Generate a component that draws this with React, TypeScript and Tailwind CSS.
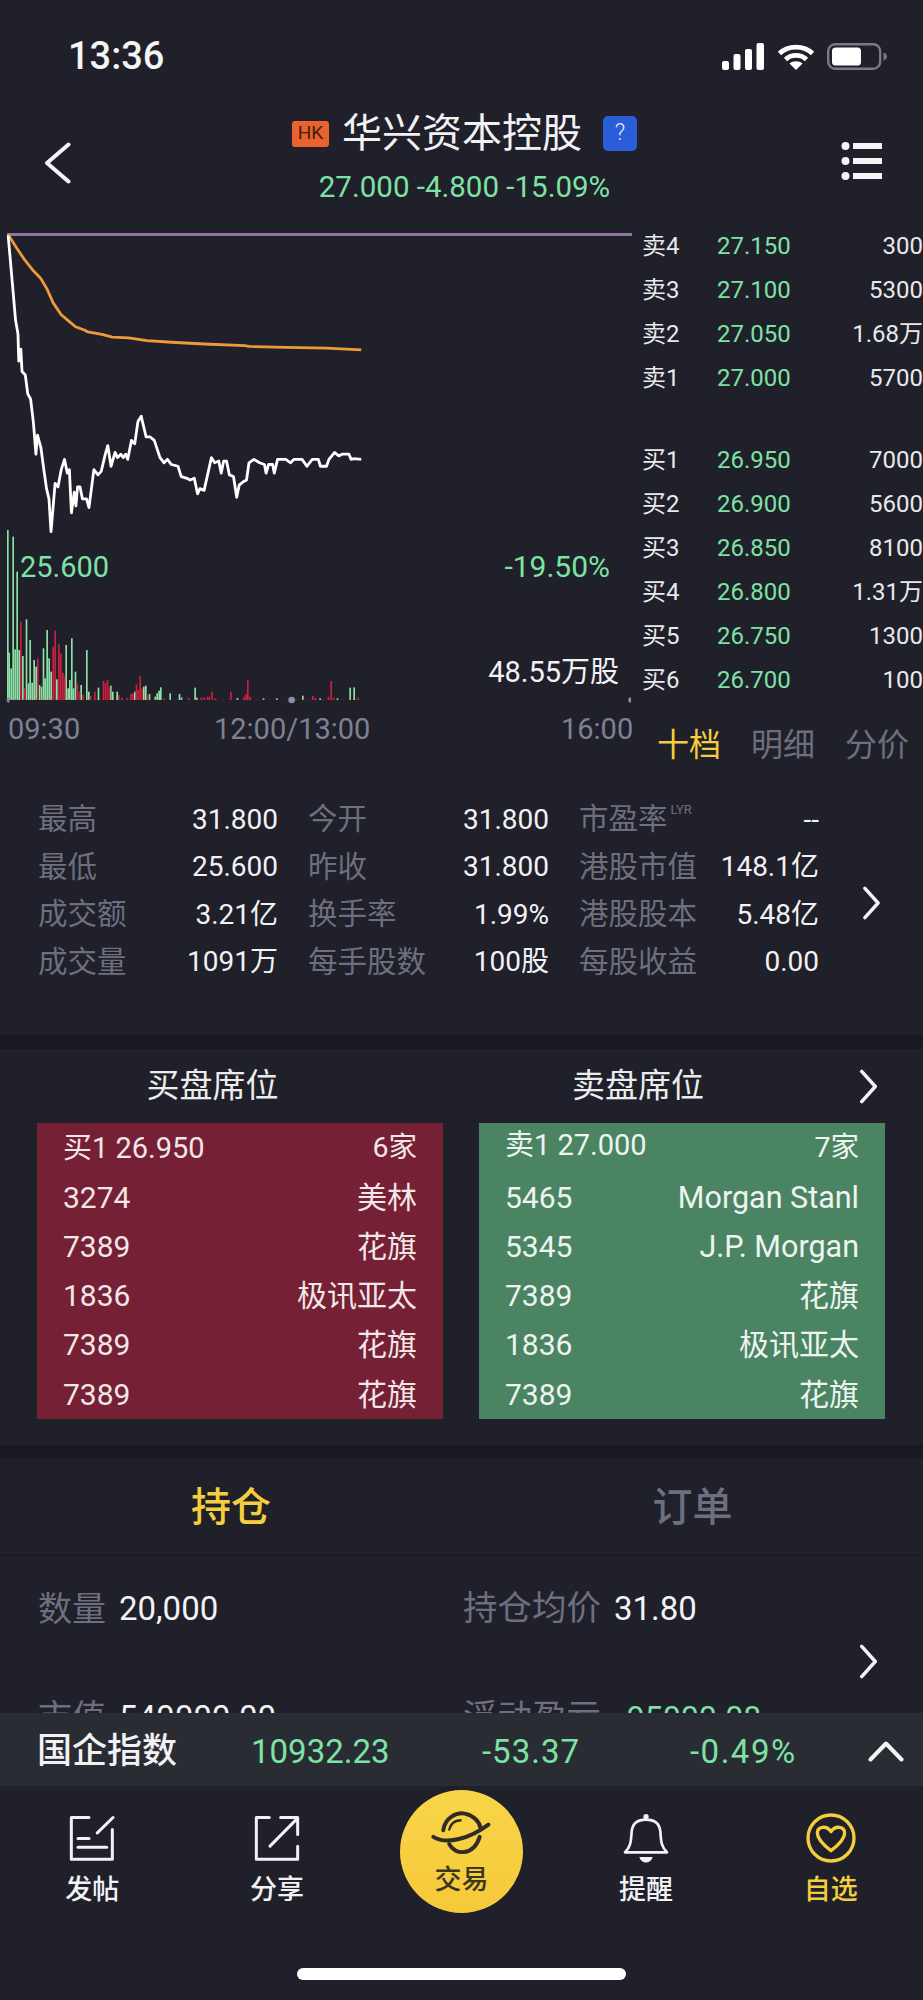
import React from "react";

const GREEN = "text-[#7de3a4]";

const whiteLine =
  "20,45 30,180 38,290 44,330 46,410 51,375 54,440 62,450 68,505 75,520 82,590 88,680 92,625 100,660 108,730 114,780 120,810 125,905 135,765 142,775 150,725 158,695 165,735 170,725 175,850 182,790 186,830 190,775 196,775 202,810 212,810 218,835 230,725 240,740 248,730 258,680 264,655 272,715 282,675 288,690 296,680 302,690 308,680 313,695 322,640 330,650 338,585 346,570 358,630 368,630 378,640 392,690 402,705 410,695 420,710 436,715 444,745 458,750 466,755 476,750 484,795 490,780 500,785 518,690 526,705 536,700 542,735 548,700 555,700 562,740 572,745 580,805 586,770 596,760 604,755 610,705 622,695 636,705 648,710 652,735 658,710 668,710 672,735 680,695 700,695 712,705 720,695 740,695 752,715 765,695 780,695 785,715 800,715 806,695 820,675 830,685 838,680 855,680 860,695 868,693 885,695";
const orangeLine =
  "20,42 40,80 60,115 80,145 100,170 115,200 130,240 150,275 170,295 185,310 208,320 215,325 250,332 275,340 315,342 360,350 420,355 500,360 600,365 610,367 700,370 800,372 885,377";

const greenBars = [
  [23, 30], [27, 398], [33, 445], [39, 50], [45, 388], [51, 155], [57, 390], [68, 408], [79, 298], [85, 490], [90, 360], [96, 488], [102, 420], [108, 440], [118, 495], [124, 500], [130, 385], [135, 475], [141, 330], [147, 415], [153, 455], [170, 478], [198, 375], [204, 505], [209, 480], [215, 355], [220, 505], [226, 455], [243, 495], [260, 390], [266, 515], [295, 503], [332, 497], [338, 515], [351, 515], [404, 515], [431, 500], [437, 497], [448, 522], [465, 530], [471, 520], [477, 512], [482, 502], [510, 520], [538, 522], [544, 532], [585, 503], [590, 533], [712, 534], [790, 535], [830, 535], [908, 527], [960, 535], [1012, 535], [1050, 503], [1062, 502],
];
const redBars = [
  [62, 305], [74, 505], [113, 415], [159, 380], [165, 332], [176, 372], [182, 400], [188, 458], [193, 470], [232, 490], [238, 515], [249, 525], [272, 528], [284, 515], [310, 483], [316, 490], [322, 480], [328, 500], [356, 525], [365, 533], [380, 533], [392, 522], [398, 520], [409, 493], [414, 510], [420, 468], [426, 505], [442, 525], [492, 535], [565, 533], [603, 533], [612, 532], [622, 530], [628, 530], [636, 515], [645, 535], [692, 515], [732, 530], [738, 522], [743, 480], [750, 530], [938, 527], [945, 533], [985, 530], [993, 483], [1000, 533], [1074, 532],
];

function Chevron({ className }: { className: string }) {
  return (
    <svg viewBox="0 0 20 36" className={className} fill="none" stroke="#f2f2f4" strokeWidth="3.6" strokeLinecap="round" strokeLinejoin="round">
      <path d="M3 2.5 L17 18 L3 33.5" />
    </svg>
  );
}

function StatusBar() {
  return (
    <div className="h-[112px] flex items-center justify-between pl-[68px] pr-[36px]">
      <span className="text-[38px] font-medium text-[#f5f5f7] leading-none">13:36</span>
      <div className="flex items-center">
        <svg width="43" height="27" viewBox="0 0 43 27" fill="#fff">
          <rect x="0" y="18" width="7" height="9" rx="2" />
          <rect x="11.5" y="11" width="7" height="16" rx="2" />
          <rect x="23" y="6" width="7" height="21" rx="2" />
          <rect x="34.5" y="0" width="7.5" height="27" rx="2" />
        </svg>
        <svg className="ml-[12px]" width="38" height="27" viewBox="0 0 38 27" fill="none" stroke="#fff" strokeWidth="4.6">
          <path d="M2.5 10.5 C11 2 27 2 35.5 10.5" />
          <path d="M8.5 16.5 C14 11 24 11 29.5 16.5" />
          <path d="M12.5 20.5 C16 17.5 22 17.5 25.5 20.5 L19 27 Z" fill="#fff" stroke="none" />
        </svg>
        <svg className="ml-[12px]" width="60" height="27" viewBox="0 0 60 27" fill="none">
          <rect x="1.2" y="1.2" width="52" height="24.6" rx="7" stroke="#7a7a82" strokeWidth="2.4" />
          <rect x="5" y="4.5" width="29" height="18" rx="3.5" fill="#fff" />
          <path d="M56.5 9.5 C59 10.5 60 12 60 13.5 C60 15 59 16.5 56.5 17.5 Z" fill="#7a7a82" />
        </svg>
      </div>
    </div>
  );
}

function Header() {
  return (
    <div className="h-[108px] pb-[12px] flex items-center">
      <div className="flex-1 pl-[44px] pt-[6px]">
        <svg width="27" height="42" viewBox="0 0 27 42" fill="none" stroke="#f5f5f7" strokeWidth="4" strokeLinecap="round" strokeLinejoin="round">
          <path d="M24.5 2.5 L3 21 L24.5 39.5" />
        </svg>
      </div>
      <div className="flex flex-col items-center ml-[3px]">
        <div className="flex items-center h-[40px] -mt-[4px]">
          <span className="w-[37px] h-[26px] flex items-center justify-center bg-[#e8632d] rounded-[3px] text-[19px] text-[#43200f]">HK</span>
          <span className="ml-[13px] text-[40px] leading-[40px] text-[#f2f2f4] whitespace-nowrap">华兴资本控股</span>
          <span className="ml-[21px] w-[34px] h-[35px] flex items-center justify-center bg-[#2a5dd8] rounded-[5px] text-[23px] font-light text-[#dfe7fb]">?</span>
        </div>
        <div className={`mt-[17px] text-[29.5px] leading-[32px] whitespace-nowrap ${GREEN}`}>27.000 -4.800 -15.09%</div>
      </div>
      <div className="flex-1 flex justify-end pr-[41px] pt-[1px]">
        <svg width="41" height="40" viewBox="0 0 41 40" fill="#f5f5f7">
          <circle cx="4.5" cy="5" r="4" />
          <circle cx="4.5" cy="20" r="4" />
          <circle cx="4.5" cy="35" r="4" />
          <rect x="12" y="2" width="29" height="6" />
          <rect x="12" y="17" width="29" height="6" />
          <rect x="12" y="32" width="29" height="6" />
        </svg>
      </div>
    </div>
  );
}

function Chart() {
  return (
    <div className="w-[641px] flex-none">
      <div className="relative h-[490px]">
        <svg width="641" height="490" viewBox="0 0 641 490" fill="none">
          <line x1="7" y1="14.5" x2="632" y2="14.5" stroke="#8f75a0" strokeWidth="3" />
          <g transform="scale(0.40816 0.34439)">
            <polyline points={orangeLine} stroke="#ef9a3a" strokeWidth="2.8" vectorEffect="non-scaling-stroke" strokeLinejoin="round" />
            <polyline points={whiteLine} stroke="#ffffff" strokeWidth="2.8" vectorEffect="non-scaling-stroke" strokeLinejoin="round" />
          </g>
          <g transform="translate(0 300) scale(0.33333)">
            {greenBars.map(([x, top]) => (
              <rect key={`g${x}`} x={x - 2} y={top} width="5" height={540 - top} fill="#8ce2a4" />
            ))}
            {redBars.map(([x, top]) => (
              <rect key={`r${x}`} x={x - 2} y={top} width="5" height={540 - top} fill="#c9203f" />
            ))}
            <line x1="25" y1="539" x2="1078" y2="539" stroke="#c9203f" strokeWidth="1.5" strokeDasharray="6 14" />
            <circle cx="875" cy="540" r="10" fill="#8f8aa8" />
            <path d="M28 532 a8 8 0 0 0 0 16 Z" fill="#8f8aa8" />
            <path d="M1893 532 a8 8 0 0 0 0 16 Z" fill="#8f8aa8" />
          </g>
        </svg>
        <span className={`absolute left-[20px] top-[331px] text-[29px] leading-[32px] ${GREEN}`}>25.600</span>
        <span className={`absolute right-[31px] top-[331px] text-[30px] leading-[32px] ${GREEN}`}>-19.50%</span>
        <span className="absolute right-[22px] top-[436px] text-[29px] leading-[32px] text-[#f2f2f4]">48.55万股</span>
      </div>
      <div className="h-[40px] flex items-center pl-[8px] text-[29px] text-[#7f8093]">
        <span className="w-[206px]">09:30</span>
        <span className="w-[347px]">12:00/13:00</span>
        <span>16:00</span>
      </div>
    </div>
  );
}

const asks = [
  ["卖4", "27.150", "300"],
  ["卖3", "27.100", "5300"],
  ["卖2", "27.050", "1.68万"],
  ["卖1", "27.000", "5700"],
];
const bids = [
  ["买1", "26.950", "7000"],
  ["买2", "26.900", "5600"],
  ["买3", "26.850", "8100"],
  ["买4", "26.800", "1.31万"],
  ["买5", "26.750", "1300"],
  ["买6", "26.700", "100"],
];

function BookRow({ r }: { r: string[] }) {
  return (
    <div className="h-[44px] flex items-center text-[24px] leading-none">
      <span className="w-[75px] text-[#e9e9ec]">{r[0]}</span>
      <span className={`w-[80px] ${GREEN}`}>{r[1]}</span>
      <span className="flex-1 text-right text-[#e9e9ec]">{r[2]}</span>
    </div>
  );
}

function Book() {
  return (
    <div className="flex-1 pt-[4px] pl-[1px]">
      {asks.map((r) => (
        <BookRow key={r[0]} r={r} />
      ))}
      <div className="h-[38px]" />
      {bids.map((r) => (
        <BookRow key={r[0]} r={r} />
      ))}
      <div className="mt-[23px] h-[40px] flex items-center gap-[30px] pl-[15px] text-[32px] leading-none whitespace-nowrap">
        <span className="text-[#f4ce3c]">十档</span>
        <span className="text-[#6e6f7e]">明细</span>
        <span className="text-[#6e6f7e]">分价</span>
      </div>
    </div>
  );
}

const stats = [
  ["最高", "31.800", "今开", "31.800", "市盈率", "--"],
  ["最低", "25.600", "昨收", "31.800", "港股市值", "148.1亿"],
  ["成交额", "3.21亿", "换手率", "1.99%", "港股股本", "5.48亿"],
  ["成交量", "1091万", "每手股数", "100股", "每股收益", "0.00"],
];

function Stats() {
  return (
    <div className="mt-[31px] h-[239px] flex items-start pl-[38px]">
      <div className="w-[781px] grid grid-cols-[240px_241px_240px] gap-x-[30px] text-[28px] leading-none">
        {stats.map((r) => (
          <React.Fragment key={r[0]}>
            {[0, 2, 4].map((i) => (
              <div key={i} className="h-[47.5px] flex items-center justify-between whitespace-nowrap">
                <span className="text-[#6e6f7e] text-[29.5px]">
                  {r[i]}
                  {r[i] === "市盈率" && <span className="relative -top-[15px] ml-[3px] text-[13px]">LYR</span>}
                </span>
                <span className="text-[#f2f2f4]">{r[i + 1]}</span>
              </div>
            ))}
          </React.Fragment>
        ))}
      </div>
      <Chevron className="ml-[43px] mt-[90px] w-[19px] h-[34px]" />
    </div>
  );
}

const buyRows = [
  ["买1 26.950", "6家"],
  ["3274", "美林"],
  ["7389", "花旗"],
  ["1836", "极讯亚太"],
  ["7389", "花旗"],
  ["7389", "花旗"],
];
const sellRows = [
  ["卖1 27.000", "7家"],
  ["5465", "Morgan Stanl"],
  ["5345", "J.P. Morgan"],
  ["7389", "花旗"],
  ["1836", "极讯亚太"],
  ["7389", "花旗"],
];

function Seats() {
  return (
    <div className="h-[396px]">
      <div className="h-[74px] flex items-center text-[33px] text-[#ececef]">
        <span className="w-[425px] text-center">买盘席位</span>
        <span className="w-[426px] text-center">卖盘席位</span>
        <Chevron className="ml-[7px] w-[21px] h-[35px]" />
      </div>
      <div className="flex gap-[36px] px-[37px]">
        <div className="w-[406px] h-[296px] bg-[#752034] px-[26px] pt-[1px] text-[#f1e6e8] text-[30px] leading-none">
          {buyRows.map((r, i) => (
            <div key={i} className="h-[49.2px] flex items-center justify-between whitespace-nowrap">
              <span className={i === 0 ? "text-[29px]" : ""}>{r[0]}</span>
              <span className={i === 0 ? "text-[28.5px]" : ""}>{r[1]}</span>
            </div>
          ))}
        </div>
        <div className="w-[406px] h-[296px] bg-[#4b8463] px-[26px] pt-[1px] text-[#eef4f0] text-[30px] leading-none">
          {sellRows.map((r, i) => (
            <div key={i} className="h-[49.2px] flex items-center justify-between whitespace-nowrap">
              <span className={i === 0 ? "text-[29px] -translate-y-[3px]" : ""}>{r[0]}</span>
              <span className={i === 0 ? "text-[28.5px]" : i === 1 || i === 2 ? "text-[30.5px]" : ""}>{r[1]}</span>
            </div>
          ))}
        </div>
      </div>
    </div>
  );
}

function Position() {
  return (
    <div>
      <div className="h-[96px] pt-[3px] flex items-center text-[40px] leading-none">
        <span className="w-[462px] text-center font-medium text-[#f4ce3c]">持仓</span>
        <span className="w-[461px] text-center font-medium text-[#6e6f7e]">订单</span>
      </div>
      <div className="h-[2px] bg-[#1b1c23]" />
      <div className="h-[157px] overflow-hidden flex items-start pl-[38px]">
        <div className="w-[820px] text-[33px] leading-none">
          <div className="h-[105px] flex items-center">
            <span className="w-[425px] flex items-center">
              <span className="text-[34px] text-[#6e6f7e]">数量</span>
              <span className="ml-[13px] text-[#f2f2f4]">20,000</span>
            </span>
            <span className="flex items-center">
              <span className="text-[34.5px] text-[#6e6f7e]">持仓均价</span>
              <span className="ml-[13px] text-[#f2f2f4]">31.80</span>
            </span>
          </div>
          <div className="h-[112px] flex items-center">
            <span className="w-[425px] flex items-center">
              <span className="text-[34px] text-[#6e6f7e]">市值</span>
              <span className="ml-[13px] text-[#f2f2f4]">540000.00</span>
            </span>
            <span className="flex items-center">
              <span className="text-[34.5px] text-[#6e6f7e]">浮动盈亏</span>
              <span className={`ml-[17px] text-[32px] ${GREEN}`}>-95000.08</span>
            </span>
          </div>
        </div>
        <Chevron className="mt-[88px] w-[21px] h-[35px] flex-none" />
      </div>
    </div>
  );
}

function IndexBar() {
  return (
    <div className="h-[73px] bg-[#2a2c34] flex items-center pl-[37px] pt-[4px] text-[33px] leading-none whitespace-nowrap">
      <span className="w-[214px] flex-none text-[35px] font-medium text-[#f2f2f4]">国企指数</span>
      <span className={`w-[231px] flex-none ${GREEN}`}>10932.23</span>
      <span className={`w-[208px] flex-none tracking-[1px] ${GREEN}`}>-53.37</span>
      <span className={`w-[178px] flex-none tracking-[1.5px] ${GREEN}`}>-0.49%</span>
      <svg width="36" height="21" viewBox="0 0 36 21" fill="none" stroke="#f5f5f7" strokeWidth="4" strokeLinecap="round" strokeLinejoin="round">
        <path d="M2.5 18.5 L18 2.5 L33.5 18.5" />
      </svg>
    </div>
  );
}

function NavItem({ label, icon, yellow }: { label: string; icon: React.ReactNode; yellow?: boolean }) {
  return (
    <div className="flex flex-col items-center pt-[27px]">
      <div className="h-[50px] flex items-center justify-center">{icon}</div>
      <span className={`mt-[9px] text-[27px] leading-[36px] font-medium ${yellow ? "text-[#f4ce3c]" : "text-[#f2f2f4]"}`}>{label}</span>
    </div>
  );
}

function BottomNav() {
  return (
    <div>
      <div className="h-[182px] grid grid-cols-5">
        <NavItem
          label="发帖"
          icon={
            <svg width="46" height="47" viewBox="90 72 138 140" fill="none" stroke="#f2f2f4" strokeWidth="9" strokeLinecap="round" strokeLinejoin="round">
              <path d="M150 79 H97 V204 H220 V115" />
              <path d="M175 125 L222 79" />
              <path d="M117 142 H150" />
              <path d="M117 168 H203" />
            </svg>
          }
        />
        <NavItem
          label="分享"
          icon={
            <svg width="46" height="47" viewBox="642 72 138 140" fill="none" stroke="#f2f2f4" strokeWidth="9" strokeLinecap="round" strokeLinejoin="round">
              <path d="M688 79 H649 V204 H773 V165" />
              <path d="M690 165 L770 84" />
              <path d="M722 79 H773 V130" />
            </svg>
          }
        />
        <div className="flex flex-col items-center pt-[4px]">
          <div className="w-[123px] h-[123px] rounded-full bg-gradient-to-b from-[#f8d548] to-[#f5c93a] flex flex-col items-center pt-[20px]">
            <svg width="63" height="47" viewBox="120 70 190 140" fill="none" stroke="#2f2c25" strokeWidth="12" strokeLinecap="round">
              <path d="M160 130 C165 92 200 75 225 80 C250 85 268 103 272 122" />
              <path d="M178 172 C195 205 250 210 270 150" />
              <path d="M130 150 C170 175 240 155 296 113" />
              <path d="M178 128 C182 112 195 101 212 100" strokeWidth="7" />
            </svg>
            <span className="mt-[7px] text-[27px] leading-[32px] font-medium text-[#3b3620]">交易</span>
          </div>
        </div>
        <NavItem
          label="提醒"
          icon={
            <svg width="50" height="50" viewBox="65 50 150 150" fill="none" stroke="#f2f2f4" strokeWidth="8" strokeLinejoin="round">
              <path d="M77 168 C96 150 95 130 97 105 C100 78 120 70 140 70 C160 70 180 78 183 105 C185 130 184 150 203 168 Z" />
              <circle cx="140" cy="61" r="8" fill="#f2f2f4" stroke="none" />
              <path d="M120 182 H160 C155 204 125 204 120 182 Z" fill="#f2f2f4" stroke="none" />
            </svg>
          }
        />
        <NavItem
          label="自选"
          yellow
          icon={
            <svg width="50" height="50" viewBox="618 52 150 150" fill="none" stroke="#f4ce3c" strokeWidth="10" strokeLinejoin="round">
              <circle cx="693" cy="127" r="69" />
              <path d="M693 165 C660 140 652 125 652 112 C652 92 680 88 693 108 C706 88 734 92 734 112 C734 125 726 140 693 165 Z" />
            </svg>
          }
        />
      </div>
      <div className="mx-auto w-[329px] h-[12px] rounded-full bg-white" />
    </div>
  );
}

export default function App() {
  return (
    <div className="w-[923px] h-[2000px] overflow-hidden bg-[#1f2029] font-['Roboto','Noto_Sans_CJK_SC',sans-serif]">
      <StatusBar />
      <Header />
      <div className="flex">
        <Chart />
        <Book />
      </div>
      <Stats />
      <div className="h-[14px] bg-[#191a21]" />
      <Seats />
      <div className="h-[13px] bg-[#191a21]" />
      <Position />
      <IndexBar />
      <BottomNav />
    </div>
  );
}
